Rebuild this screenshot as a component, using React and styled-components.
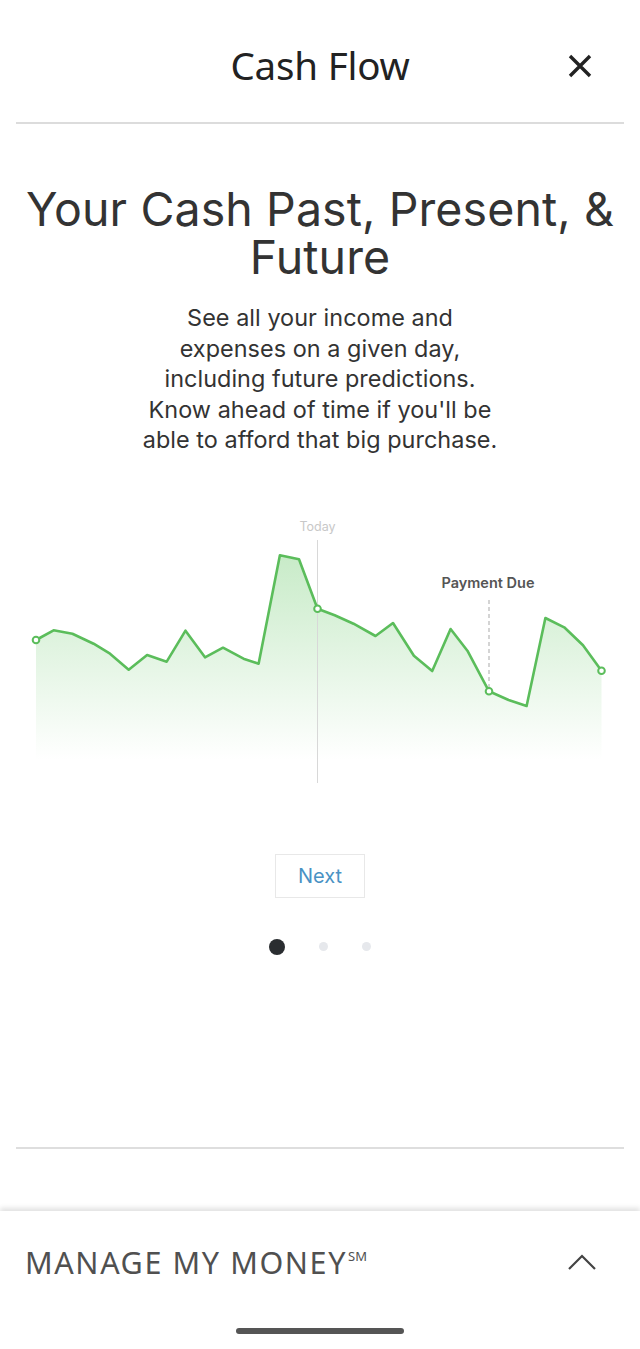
import React from 'react';
import styled, { createGlobalStyle } from 'styled-components';

const GlobalStyle = createGlobalStyle`
    html, body {
        margin: 0;
        padding: 0;
        background: #ffffff;
    }
    body {
        font-family: Inter, "Noto Sans", sans-serif;
        color: #333333;
    }
`;

const Page = styled.div`
    width: 640px;
    min-height: 1349px;
    display: flex;
    flex-direction: column;
    background: #ffffff;
`;

const Header = styled.header`
    position: relative;
    height: 122px;
    margin: 0 16px;
    display: flex;
    align-items: center;
    justify-content: center;
    border-bottom: 2px solid #dcdcdc;
`;

const HeaderTitle = styled.h1`
    margin: 8px 0 0;
    font-family: "Noto Sans", "Open Sans", sans-serif;
    font-weight: 400;
    font-size: 38.5px;
    color: #222222;
    letter-spacing: -0.2px;
`;

const CloseButton = styled.button`
    position: absolute;
    right: 30px;
    top: 52px;
    width: 28px;
    height: 28px;
    padding: 0;
    border: none;
    background: none;
    display: flex;
    align-items: center;
    justify-content: center;
`;

const Headline = styled.h2`
    margin: 61px 0 0;
    text-align: center;
    font-family: Inter, sans-serif;
    font-weight: 400;
    font-size: 46.5px;
    line-height: 48px;
    color: #333333;
    letter-spacing: 0.1px;
`;

const Body = styled.p`
    margin: 22px auto 0;
    width: 420px;
    text-align: center;
    font-family: Inter, sans-serif;
    font-size: 23.4px;
    line-height: 30.5px;
    color: #333333;
    letter-spacing: 0.05px;
`;

const ChartWrap = styled.div`
    margin-top: 44px;
    height: 300px;
`;

const NextButton = styled.button`
    align-self: center;
    margin-top: 54px;
    width: 90px;
    height: 44px;
    border: 1.5px solid #e8e8e8;
    background: #ffffff;
    color: #4a92c4;
    font-family: Inter, sans-serif;
    font-size: 20px;
    padding: 0;
`;

const Dots = styled.div`
    margin-top: 41px;
    display: flex;
    justify-content: center;
    align-items: center;
    gap: 34px;
    height: 16px;
`;

const Dot = styled.span`
    width: ${(p) => (p.active ? '16px' : '9px')};
    height: ${(p) => (p.active ? '16px' : '9px')};
    border-radius: 50%;
    background: ${(p) => (p.active ? '#2a2d30' : '#e6e8ec')};
`;

const Divider = styled.div`
    margin: 192px 16px 0;
    height: 2px;
    background: #dedede;
`;

const Sheet = styled.footer`
    margin-top: 62px;
    height: 138px;
    display: flex;
    flex-direction: column;
    box-shadow: 0 -3px 5px rgba(0, 0, 0, 0.12);
    background: #ffffff;
`;

const SheetRow = styled.div`
    height: 102px;
    padding: 0 44px 0 25px;
    display: flex;
    align-items: center;
    justify-content: space-between;
`;

const SheetTitle = styled.span`
    font-family: "Noto Sans", "Open Sans", sans-serif;
    font-size: 30.5px;
    color: #505050;
    letter-spacing: 1.6px;
    sup {
        font-size: 13px;
        vertical-align: 13px;
        letter-spacing: 0;
        margin-left: 1px;
    }
`;

const HomeBar = styled.div`
    align-self: center;
    margin-top: 15px;
    width: 168px;
    height: 6px;
    border-radius: 3px;
    background: #555555;
`;

const points = [
    [36, 640], [53.6, 630.3], [72.4, 633.7], [93.6, 643.7], [110, 653.7],
    [128.7, 669.7], [147.1, 655], [166.7, 661.7], [185.5, 630.7], [205, 657.3],
    [223, 647.7], [243.5, 658.7], [258.6, 663.7], [279.9, 555.3], [299, 559.3],
    [317.5, 608.7], [334.7, 615.3], [353.5, 623.7], [375.5, 636], [393, 623],
    [413.9, 655.7], [432.2, 671], [450.6, 629], [467.4, 650.7], [489, 691.3],
    [508.6, 700], [526.6, 706], [545.4, 618], [564.2, 627.3], [583, 645.3],
    [601.5, 670.7]
];

const CashChart = () => {
    const line = points.map(([x, y], i) => `${i ? 'L' : 'M'}${x} ${y}`).join(' ');
    const area = `${line} L601.5 765 L36 765 Z`;
    const markers = [points[0], points[15], points[24], points[30]];

    return (
        <svg width="640" height="300" viewBox="0 500 640 300">
            <defs>
                <linearGradient id="cashFill" x1="0" y1="555" x2="0" y2="760" gradientUnits="userSpaceOnUse">
                    <stop offset="0" stopColor="#7ccf7c" stopOpacity="0.42" />
                    <stop offset="1" stopColor="#7ccf7c" stopOpacity="0" />
                </linearGradient>
            </defs>
            <path d={ area } fill="url(#cashFill)" />
            <line x1="317.5" y1="540" x2="317.5" y2="783" stroke="#d8d8d8" strokeWidth="1" />
            <text x="317.5" y="531" textAnchor="middle" fontFamily="Inter, sans-serif" fontSize="12.5" fill="#c8c8c8">Today</text>
            <line x1="489" y1="600" x2="489" y2="691" stroke="#a9a9a9" strokeWidth="1" strokeDasharray="4 3" />
            <text x="488" y="588" textAnchor="middle" fontFamily="Inter, sans-serif" fontSize="14.5" fontWeight="600" fill="#555555">Payment Due</text>
            <path d={ line } fill="none" stroke="#5bbd5b" strokeWidth="2.6" strokeLinejoin="round" strokeLinecap="round" />
            { markers.map(([x, y], ix) => (
                <circle key={ ix } cx={ x } cy={ y } r="3.3" fill="#ffffff" stroke="#5bbd5b" strokeWidth="2" />
            )) }
        </svg>
    );
};

const App = () => {
    return (
        <Page>
            <GlobalStyle />
            <Header>
                <HeaderTitle>Cash Flow</HeaderTitle>
                <CloseButton aria-label="Close">
                    <svg width="24" height="24" viewBox="0 0 24 24">
                        <path d="M2 2 L22 22 M22 2 L2 22" stroke="#222222" strokeWidth="3.4" strokeLinecap="butt" />
                    </svg>
                </CloseButton>
            </Header>
            <Headline>Your Cash Past, Present, &amp;<br />Future</Headline>
            <Body>
                See all your income and<br />
                expenses on a given day,<br />
                including future predictions.<br />
                Know ahead of time if you'll be<br />
                able to afford that big purchase.
            </Body>
            <ChartWrap>
                <CashChart />
            </ChartWrap>
            <NextButton>Next</NextButton>
            <Dots>
                <Dot active />
                <Dot />
                <Dot />
            </Dots>
            <Divider />
            <Sheet>
                <SheetRow>
                    <SheetTitle>MANAGE MY MONEY<sup>SM</sup></SheetTitle>
                    <svg width="28" height="16" viewBox="0 0 28 16">
                        <path d="M1 15 L14 2 L27 15" fill="none" stroke="#444444" strokeWidth="2.2" />
                    </svg>
                </SheetRow>
                <HomeBar />
            </Sheet>
        </Page>
    );
};

export default App;
